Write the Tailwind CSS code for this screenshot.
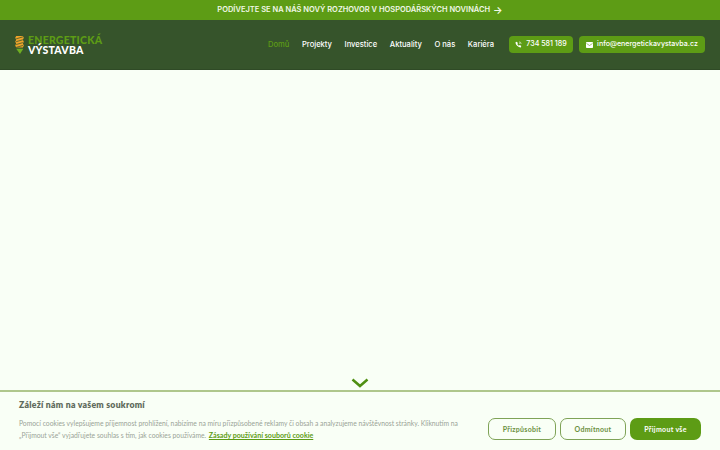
<!DOCTYPE html>
<html lang="cs"><head><meta charset="utf-8">
<script src="https://cdn.jsdelivr.net/npm/@tailwindcss/browser@4"></script>
</head>
<body class="w-[720px] h-[450px] overflow-hidden bg-[#f9fff6] font-['Inter','Liberation_Sans',sans-serif]">
<div class="relative h-[450px] flex flex-col">
  <div class="h-5 shrink-0 bg-[#5d9c15] flex items-center justify-center text-[7.5px] font-semibold text-[#f1f8e8]">PODÍVEJTE SE NA NÁŠ NOVÝ ROZHOVOR V HOSPODÁŘSKÝCH NOVINÁCH <span class="ml-[3px] text-[10px] leading-none">→</span></div>
  <header class="h-[50px] shrink-0 bg-[#36542b] flex items-center pl-[15px] pr-[15px] border-b border-[#2f4a26]">
    <div class="flex items-center gap-[3px] mt-[1px]">
      <svg width="10" height="20" viewBox="0 0 10 21"><path d="M1 1 H8 L9 3 L8 5 L9 7 L8 9 L9 11 L8 13 H1 L0 11 L1 9 L0 7 L1 5 L0 3Z" fill="#f0a42a"/><path d="M1 4 L8 2 M1 7 L8 5 M1 10 L8 8 M1 13 L8 11" stroke="#36542b" stroke-width=".8"/><path d="M1 14.500 H8.500 L5 20 Z" fill="#6fae22"/></svg>
      <div class="font-['Lato','Inter',sans-serif] font-black text-[10.5px] leading-[10.5px] tracking-[0.25px]">
        <div class="text-[#5d9c15]">ENERGETICKÁ</div>
        <div class="text-white">VÝSTAVBA</div>
      </div>
    </div>
    <nav class="ml-auto flex items-center gap-[12.6px] text-[7.6px] font-medium text-white">
      <a class="text-[#5d9c15]">Domů</a><a>Projekty</a><a>Investice</a><a>Aktuality</a><a>O nás</a><a>Kariéra</a>
    </nav>
    <div class="ml-[15px] flex items-center gap-[6px] text-[7.1px] font-medium text-white">
      <a class="h-[17px] w-[64px] rounded-[4px] bg-[#5d9c15] flex items-center justify-center gap-[4px] whitespace-nowrap">
        <svg width="7" height="7" viewBox="0 0 24 24" fill="#fff"><path d="M6.600 2.500 10 7.500 8 10.500c1 2.500 3 4.500 5.500 5.500l3-2 5 3.400-1.500 3.600c-.4.800-1.200 1.200-2 1C9.500 20.500 3.500 14.500 1.500 6c-.2-.8.2-1.600 1-2z"/><path d="M14 3a7 7 0 0 1 7 7M14 7a3 3 0 0 1 3 3" stroke="#fff" stroke-width="2" fill="none"/></svg>
        734 581 189</a>
      <a class="h-[17px] w-[126px] rounded-[4px] bg-[#5d9c15] flex items-center justify-center gap-[4px] whitespace-nowrap">
        <svg width="7" height="6" viewBox="0 0 14 12"><rect width="14" height="12" rx="1.500" fill="#fff"/><path d="M1 3 7 7 13 3" stroke="#5d9c15" stroke-width="1.200" fill="none"/></svg>
        info@energetickavystavba.cz</a>
    </div>
  </header>
  <main class="flex-1 relative flex items-end justify-center pb-[2px]">
    <svg width="18" height="10" viewBox="0 0 18 10" fill="none"><path d="M1.500 1.500 9 8 16.500 1.500" stroke="#4f8f12" stroke-width="2.500"/></svg>
  </main>
  <section class="h-[60px] shrink-0 border-t-2 border-[#afc78c] flex pl-[19px] pr-[19px] font-['Lato','Inter',sans-serif]">
    <div class="flex-1 pt-[7px]">
      <h2 class="text-[8.7px] leading-[12px] font-extrabold tracking-[0.25px] text-[#5f6b5c]">Záleží nám na vašem soukromí</h2>
      <p class="mt-[6px] text-[6.75px] leading-[12px] text-[#9aa396] whitespace-nowrap">Pomocí cookies vylepšujeme příjemnost prohlížení, nabízíme na míru přizpůsobené reklamy či obsah a analyzujeme návštěvnost stránky. Kliknutím na<br>„Přijmout vše“ vyjadřujete souhlas s tím, jak cookies používáme. <a class="font-bold text-[7.1px] underline text-[#5d9c15] ml-[1px]">Zásady používání souborů cookie</a></p>
    </div>
    <div class="flex items-start gap-[4px] pt-[26px] text-[7px] font-bold tracking-[0.3px]">
      <button class="h-[22px] w-[68px] rounded-[7px] border-[1.5px] border-[#7fa357] text-[#6b9040]">Přizpůsobit</button>
      <button class="h-[22px] w-[66px] rounded-[7px] border-[1.5px] border-[#7fa357] text-[#6b9040]">Odmítnout</button>
      <button class="h-[22px] w-[71px] rounded-[7px] bg-[#5d9c15] text-white">Přijmout vše</button>
    </div>
  </section>
</div>
</body></html>
